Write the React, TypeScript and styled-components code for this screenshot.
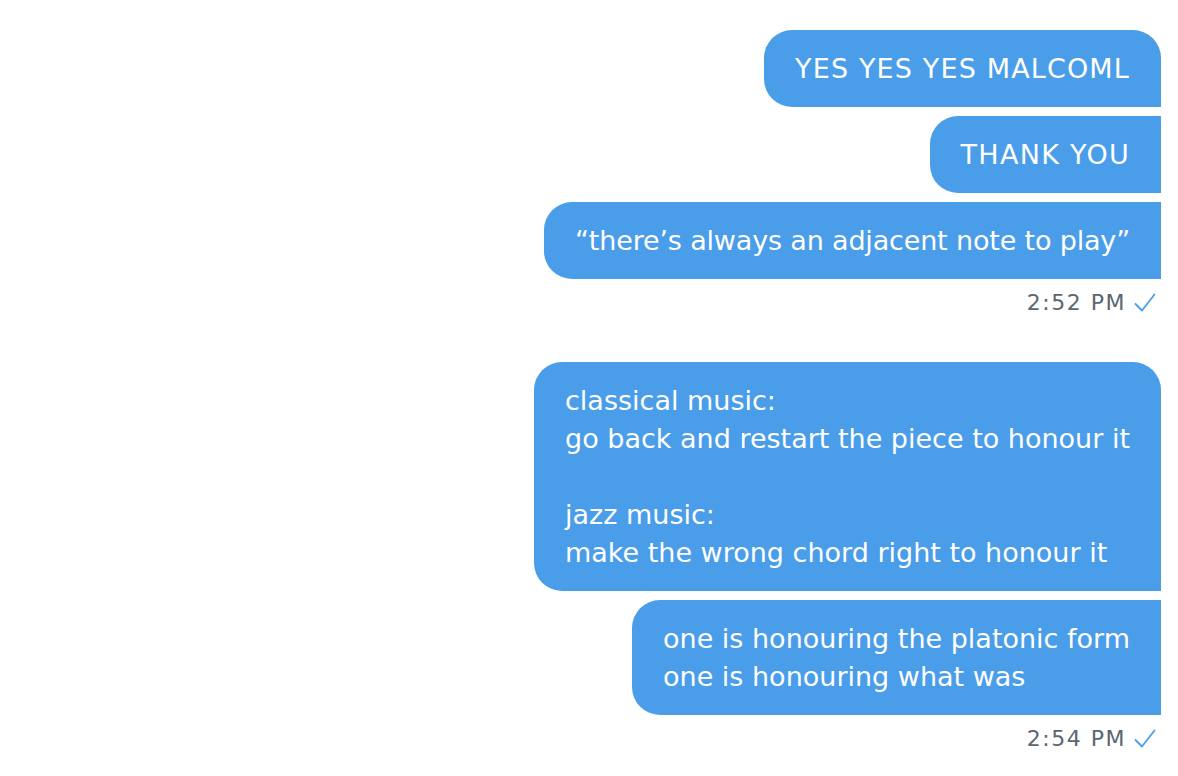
import React from "react";
import styled, { createGlobalStyle } from "styled-components";

const Global = createGlobalStyle`
  html, body { margin: 0; padding: 0; background: #ffffff; }
  body { font-family: "DejaVu Sans", "Liberation Sans", Arial, sans-serif; }
`;

const Thread = styled.div`
  display: flex;
  flex-direction: column;
  align-items: flex-end;
  padding: 30px 17px 0 0;
  gap: 47px;
`;

const Group = styled.div`
  display: flex;
  flex-direction: column;
  align-items: flex-end;
  gap: 9px;
`;

const Bubble = styled.div<{ $first?: boolean; $tracking?: number }>`
  background: #4a9de8;
  color: #ffffff;
  font-size: 27px;
  line-height: 38px;
  letter-spacing: ${(p) => p.$tracking ?? 0}px;
  padding: 19.5px 31px;
  border-radius: ${(p) => (p.$first ? "28px 28px 0 28px" : "28px 0 0 28px")};
  white-space: pre;
`;

const Meta = styled.div`
  display: flex;
  align-items: center;
  gap: 8px;
  margin-top: 3px;
  padding-right: 5px;
  color: #5b6670;
  font-size: 22px;
  line-height: 24px;
  letter-spacing: 1.5px;
`;

const Check = () => (
  <svg width="22" height="22" viewBox="0 0 22 22" fill="none">
    <path d="M1.5 12 L8 18.5 L20.5 2.5" stroke="#4a9de8" strokeWidth="1.8" strokeLinecap="round" strokeLinejoin="round" />
  </svg>
);

type Msg = { text: string; tracking?: number };

const groups: { msgs: Msg[]; time: string }[] = [
  {
    msgs: [
      { text: "YES YES YES MALCOML", tracking: 1.15 },
      { text: "THANK YOU", tracking: 1.3 },
      { text: "\u201Cthere\u2019s always an adjacent note to play\u201D", tracking: -0.17 },
    ],
    time: "2:52 PM",
  },
  {
    msgs: [
      {
        text: "classical music:\ngo back and restart the piece to honour it\n\njazz music:\nmake the wrong chord right to honour it",
      },
      { text: "one is honouring the platonic form\none is honouring what was" },
    ],
    time: "2:54 PM",
  },
];

export default function App() {
  return (
    <>
      <Global />
      <Thread>
        {groups.map((g, gi) => (
          <Group key={gi}>
            {g.msgs.map((m, i) => (
              <Bubble key={i} $first={i === 0} $tracking={m.tracking}>
                {m.text}
              </Bubble>
            ))}
            <Meta>
              <span>{g.time}</span>
              <Check />
            </Meta>
          </Group>
        ))}
      </Thread>
    </>
  );
}
